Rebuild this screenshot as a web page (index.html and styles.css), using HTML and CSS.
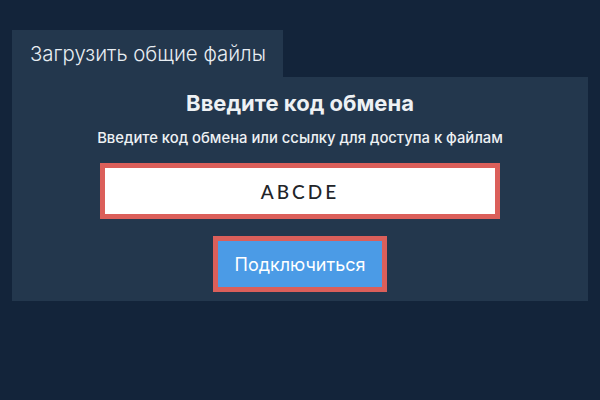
FILE: index.html
```html
<!DOCTYPE html>
<html lang="ru">
<head>
<meta charset="utf-8">
<title>Загрузить общие файлы</title>
<link rel="stylesheet" href="styles.css">
</head>
<body>
<div class="wrap">
  <div class="tabs">
    <div class="tab">Загрузить общие файлы</div>
  </div>
  <div class="panel">
    <h1 class="title">Введите код обмена</h1>
    <p class="subtitle">Введите код обмена или ссылку для доступа к файлам</p>
    <div class="code-input">ABCDE</div>
    <button class="connect">Подключиться</button>
  </div>
</div>
</body>
</html>
```
FILE: styles.css
```css
html, body {
  margin: 0;
  padding: 0;
  background: #13243a;
  width: 600px;
  height: 400px;
  overflow: hidden;
  font-family: Inter, "Noto Sans", sans-serif;
}
.wrap {
  padding: 30px 12px 0 12px;
}
.tabs {
  display: flex;
}
.tab {
  width: 271px;
  height: 47px;
  box-sizing: border-box;
  background: #23374d;
  color: #e8edf2;
  font-size: 20.4px;
  font-weight: 300;
  padding-left: 18px;
  display: flex;
  align-items: center;
}
.panel {
  background: #23374d;
  height: 224px;
  box-sizing: border-box;
  display: flex;
  flex-direction: column;
  align-items: center;
  padding-top: 14px;
}
.title {
  margin: 0;
  font-size: 22px;
  font-weight: 700;
  color: #eef1f4;
  line-height: 24px;
}
.subtitle {
  margin: 14px 0 0 0;
  font-size: 14.8px;
  font-weight: 500;
  color: #eef1f4;
  line-height: 18px;
}
.code-input {
  margin-top: 16px;
  width: 400px;
  height: 56px;
  box-sizing: border-box;
  border: 5px solid #db5f5a;
  background: #ffffff;
  display: flex;
  align-items: center;
  justify-content: center;
  font-family: Lato, "Open Sans", sans-serif;
  font-size: 19px;
  font-weight: 500;
  letter-spacing: 3px;
  color: #222428;
}
.connect {
  margin-top: 17px;
  width: 174px;
  height: 56px;
  box-sizing: border-box;
  border: 5px solid #db5f5a;
  background: #4b9be6;
  color: #ffffff;
  font-family: Inter, "Noto Sans", sans-serif;
  font-size: 18px;
  font-weight: 400;
  padding: 0;
}
```
